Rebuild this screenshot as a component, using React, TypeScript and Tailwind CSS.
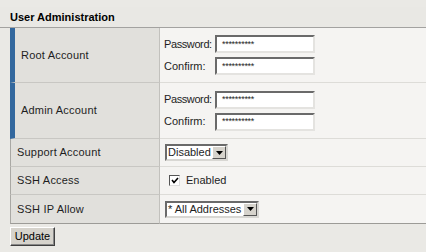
import React from 'react';

function Arrow() {
  return (
    <svg width="7" height="4" viewBox="0 0 7 4">
      <polygon points="0,0 7,0 3.5,4" fill="#000" />
    </svg>
  );
}

function Field({ value }: { value: string }) {
  return (
    <div className="h-[18px] w-[100px] bg-white border-2 border-t-[#6a6a6a] border-l-[#6a6a6a] border-b-[#e4e3e0] border-r-[#e4e3e0] flex items-center pl-[5px] text-[9px] leading-none tracking-[-0.3px]">
      {value}
    </div>
  );
}

function Select({ value, width }: { value: string; width: string }) {
  return (
    <div className={`h-[17px] ${width} bg-white border-2 border-t-[#6a6a6a] border-l-[#6a6a6a] border-b-[#d8d7d3] border-r-[#d8d7d3] flex`}>
      <span className="flex-1 pl-[1px] leading-[13px] whitespace-nowrap overflow-hidden">{value}</span>
      <span className="w-[14px] h-[13px] bg-[#d6d3cc] border border-t-[#fff] border-l-[#fff] border-b-[#555] border-r-[#555] flex items-center justify-center">
        <Arrow />
      </span>
    </div>
  );
}

function Row({
  label,
  accent,
  height,
  last,
  children,
}: {
  label: string;
  accent?: boolean;
  height: string;
  last?: boolean;
  children: React.ReactNode;
}) {
  return (
    <div className={`flex ${height}`}>
      <div
        className={`w-[150px] flex items-center bg-[#e1e0dc] border-r border-r-[#c2c1bd] pl-[6px] tracking-[0.2px] ${
          accent ? 'border-l-[5px] border-l-[#33689e]' : 'border-l border-l-[#a9a8a4]'
        } ${last ? 'border-b border-b-[#9c9b97]' : 'border-b border-b-[#c8c7c3]'}`}
      >
        {label}
      </div>
      <div
        className={`flex-1 flex items-center bg-[#f5f4f2] ${
          last ? 'border-b border-b-[#9c9b97]' : 'border-b border-b-[#dddcd8]'
        }`}
      >
        {children}
      </div>
    </div>
  );
}

function Passwords() {
  return (
    <div className="flex flex-col gap-[4px] pl-[4px]">
      <div className="flex items-center">
        <span className="w-[51px] tracking-[-0.4px]">Password:</span>
        <Field value="**********" />
      </div>
      <div className="flex items-center">
        <span className="w-[51px]">Confirm:</span>
        <Field value="**********" />
      </div>
    </div>
  );
}

export default function App() {
  return (
    <div className="w-[426px] h-[252px] bg-[#eae9e5] pt-[7px] font-['Liberation_Sans',Arial,sans-serif] text-[11px] text-[#1e1e1e]">
      <div className="h-[21px] bg-[#e9e8e4] border-b border-b-[#a3a2a0] pl-[10px] font-bold leading-[20px] text-black">
        User Administration
      </div>
      <div className="pl-[10px]">
        <Row label="Root Account" accent height="h-[55px]">
          <Passwords />
        </Row>
        <Row label="Admin Account" accent height="h-[56px]">
          <Passwords />
        </Row>
        <Row label="Support Account" height="h-[28px]">
          <div className="pl-[5px]">
            <Select value="Disabled" width="w-[63px]" />
          </div>
        </Row>
        <Row label="SSH Access" height="h-[28px]">
          <div className="pl-[9px] flex items-center gap-[6px]">
            <span className="w-[11px] h-[11px] bg-white border border-t-[#555] border-l-[#555] border-b-[#ddd] border-r-[#ddd] flex items-center justify-center">
              <svg width="8" height="7" viewBox="0 0 8 7">
                <polyline points="1,3 3,5.5 7,1" fill="none" stroke="#000" strokeWidth="1.6" />
              </svg>
            </span>
            <span>Enabled</span>
          </div>
        </Row>
        <Row label="SSH IP Allow" height="h-[29px]" last>
          <div className="pl-[5px]">
            <Select value="* All Addresses" width="w-[94px]" />
          </div>
        </Row>
        <div className="pt-[3px]">
          <button className="h-[19px] w-[45px] bg-[#d6d3cc] border border-t-[#fff] border-l-[#fff] border-b-[#404040] border-r-[#404040] shadow-[inset_-1px_-1px_0_#888] text-[11px] leading-none text-black">
            Update
          </button>
        </div>
      </div>
    </div>
  );
}
